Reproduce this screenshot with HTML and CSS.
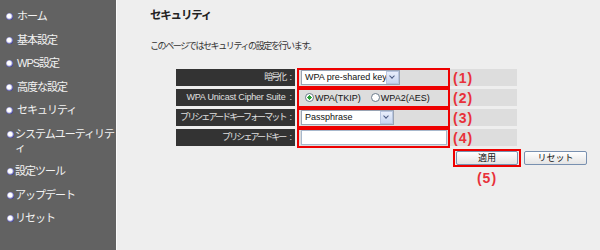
FILE: index.html
```html
<!DOCTYPE html>
<html lang="ja">
<head>
    <meta charset="UTF-8">
    <title>セキュリティ</title>
    <link rel="stylesheet" href="styles.css">
</head>
<body>
    <div class="page">
        <ul class="menu">
            <li><span class="dot"></span>ホーム</li>
            <li><span class="dot"></span>基本設定</li>
            <li><span class="dot"></span>WPS設定</li>
            <li><span class="dot"></span>高度な設定</li>
            <li><span class="dot"></span>セキュリティ</li>
            <li class="tight"><span class="dot"></span>システムユーティリティ</li>
            <li class="tight"><span class="dot"></span>設定ツール</li>
            <li class="tight"><span class="dot"></span>アップデート</li>
            <li class="tight"><span class="dot"></span>リセット</li>
        </ul>

        <div class="main">
            <h1>セキュリティ</h1>
            <p class="intro">このページではセキュリティの設定を行います。</p>

            <div class="form">
                <div class="row">
                    <div class="label">暗号化<span class="colon">:</span></div>
                    <div class="value">
                        <div class="mark">
                            <div class="select sel-enc">WPA pre-shared key<span class="arrow"></span></div>
                        </div>
                        <span class="num">(1)</span>
                    </div>
                </div>
                <div class="row">
                    <div class="label latin">WPA Unicast Cipher Suite<span class="colon">:</span></div>
                    <div class="value">
                        <div class="mark radios">
                            <span class="radio on"></span>WPA(TKIP)
                            <span class="radio"></span>WPA2(AES)
                        </div>
                        <span class="num">(2)</span>
                    </div>
                </div>
                <div class="row">
                    <div class="label">プリシェアードキーフォーマット<span class="colon">:</span></div>
                    <div class="value">
                        <div class="mark">
                            <div class="select sel-fmt">Passphrase<span class="arrow"></span></div>
                        </div>
                        <span class="num">(3)</span>
                    </div>
                </div>
                <div class="row">
                    <div class="label">プリシェアードキー<span class="colon">:</span></div>
                    <div class="value">
                        <div class="mark">
                            <div class="text-input"></div>
                        </div>
                        <span class="num">(4)</span>
                    </div>
                </div>

                <div class="actions">
                    <div class="apply">
                        <div class="mark btn-mark"><button>適用</button></div>
                        <span class="num">(5)</span>
                    </div>
                    <button class="reset">リセット</button>
                </div>
            </div>
        </div>
    </div>
</body>
</html>
```

FILE: styles.css
```css
* {
    box-sizing: border-box;
}
body {
    margin: 0;
    font-family: "Liberation Sans", "Noto Sans CJK JP", sans-serif;
    background-color: #eeeeee;
    color: #333;
}
.page {
    display: flex;
    height: 250px;
}
.menu {
    width: 117px;
    margin: 0;
    padding: 9px 0 0 6px;
    list-style: none;
    background-color: #626262;
    border-right: 1px solid #fafafa;
}
.menu li {
    display: flex;
    align-items: flex-start;
    color: #f2f2f2;
    font-size: 11px;
    letter-spacing: -1px;
    line-height: 14px;
    height: 23.6px;
}
.menu li.tight {
    padding-left: 1px;
}
.menu li:nth-child(6) {
    height: 37px;
    padding-right: 2px;
}
.dot {
    flex: none;
    width: 7px;
    height: 7px;
    margin: 4px 4px 0 0;
    border-radius: 50%;
    background: radial-gradient(circle at 45% 45%, #fff 0, #fff 35%, #3a3aa8 75%);
}
.menu li.tight .dot {
    margin-right: 1px;
}
.main {
    flex: 1;
    padding: 8px 0 0 33px;
}
h1 {
    margin: 0;
    font-size: 11.5px;
    letter-spacing: -1.2px;
    line-height: 14px;
    font-weight: bold;
    color: #222;
}
.intro {
    margin: 18px 0 0;
    font-size: 9px;
    letter-spacing: -1.4px;
    line-height: 12px;
}
.form {
    margin: 17px 0 0 26px;
    width: 341px;
}
.row {
    display: flex;
    gap: 3px;
    height: 17px;
    margin-bottom: 3px;
}
.label {
    width: 119px;
    background-color: #333333;
    color: #e0e0e0;
    font-size: 9px;
    letter-spacing: -1.9px;
    text-align: right;
    line-height: 17px;
    padding-right: 3px;
    white-space: nowrap;
}
.label.latin {
    letter-spacing: -0.2px;
}
.colon {
    margin-left: 4px;
    letter-spacing: 0;
}
.value {
    flex: 1;
    display: flex;
    align-items: center;
    background-color: #dddddd;
}
.mark {
    display: flex;
    align-items: center;
    width: 153px;
    height: 20px;
    margin-left: -1px;
    padding-left: 2px;
    border: 2px solid #ee0000;
}
.num {
    margin-left: 3px;
    color: #e8313a;
    font-size: 14px;
    font-weight: bold;
    letter-spacing: 1px;
}
.select {
    position: relative;
    height: 15px;
    padding: 0 0 0 3px;
    border: 1px solid #9aa4b4;
    background-color: #fff;
    font-size: 9px;
    line-height: 13px;
    color: #111;
    white-space: nowrap;
}
.sel-enc {
    width: 99px;
}
.sel-fmt {
    width: 93px;
}
.arrow {
    position: absolute;
    right: 0;
    top: 0;
    width: 13px;
    height: 13px;
    border: 1px solid #b8c6e0;
    background: linear-gradient(#e8eefb, #c8d6f0);
}
.arrow::after {
    content: "";
    position: absolute;
    left: 3px;
    top: 2px;
    width: 3px;
    height: 3px;
    border-right: 1.5px solid #4a5a80;
    border-bottom: 1.5px solid #4a5a80;
    transform: rotate(45deg);
}
.radios {
    font-size: 9px;
    color: #111;
    padding-left: 6px;
    white-space: nowrap;
}
.radio {
    flex: none;
    width: 9px;
    height: 9px;
    margin-right: 1px;
    border: 1px solid #6b7b8b;
    border-radius: 50%;
    background-color: #fff;
}
.radios .radio:nth-of-type(2) {
    margin-left: 10px;
}
.radio.on {
    background: radial-gradient(circle, #2aa03a 0, #2aa03a 40%, #fff 45%);
}
.text-input {
    width: 146px;
    height: 15px;
    border: 1px solid #a8b8cc;
    background-color: #fff;
}
.actions {
    display: flex;
    gap: 3px;
    padding-left: 277px;
}
.apply {
    display: flex;
    flex-direction: column;
    align-items: center;
}
.btn-mark {
    width: 68px;
    height: 18px;
    padding: 0 0 0 1px;
    margin: 0;
}
.apply .num {
    margin: 3px 0 0 0;
}
button {
    flex: none;
    width: 62px;
    height: 14px;
    padding: 0;
    border: 1px solid #7890b0;
    border-radius: 2px;
    background: linear-gradient(#ffffff, #e4e4e4);
    font-family: inherit;
    font-size: 9px;
    line-height: 12px;
    color: #111;
}
.reset {
    margin-top: 2px;
    width: 63px;
}
```
